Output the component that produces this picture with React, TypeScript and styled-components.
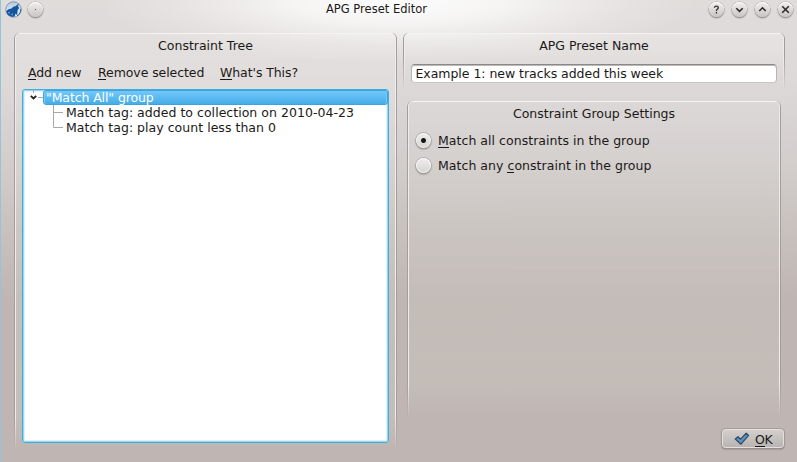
import React from 'react';
import styled, { createGlobalStyle, css } from 'styled-components';

const GlobalStyle = createGlobalStyle`
  html, body { margin: 0; padding: 0; }
  body { font-family: "DejaVu Sans", sans-serif; font-size: 12.5px; color: #1b1918; }
  * { box-sizing: border-box; }
`;

const Window = styled.div`
  width: 797px;
  height: 462px;
  overflow: hidden;
  display: flex;
  flex-direction: column;
  border-left: 1px solid #96c3dc;
  background:
    radial-gradient(ellipse 300px 64px at 397px 0, rgba(255,255,255,.95) 0%, rgba(255,255,255,.7) 35%, rgba(255,255,255,.2) 75%, rgba(255,255,255,0) 100%),
    linear-gradient(#e0dcda 0, #ddd9d8 80px, #d3cecc 160px, #c8c1be 230px, #bfb6b3 300px, #bfb6b3 100%);
`;

const TitleBar = styled.header`
  height: 33px;
  flex: none;
  display: grid;
  grid-template-columns: 325px 1fr 88px;
  align-items: start;
`;

const TitleButtons = styled.div<{ $gap: number; $left: number }>`
  display: flex;
  align-items: flex-start;
  gap: ${p => p.$gap}px;
  padding: 1px 0 0 ${p => p.$left}px;
`;

const Title = styled.h1`
  margin: 0;
  padding-top: 2px;
  font-size: 11.5px;
  font-weight: 400;
  line-height: 15px;
  white-space: nowrap;
`;

const RoundButton = styled.button`
  width: 15px;
  height: 15px;
  margin-top: 1px;
  padding: 0;
  display: grid;
  place-items: center;
  border: 0;
  border-radius: 50%;
  background: linear-gradient(#f0efee, #c9c5c2);
  box-shadow: 0 0 0 .6px #aaa5a2, 0 1px 1.5px #77716e, inset 0 1px 0 #fafafa;
  svg { display: block; fill: none; stroke: #302d2c; stroke-width: 1.6; }
`;

const StickyDot = styled.span`
  width: 1px;
  height: 1px;
  background: #5b5755;
  box-shadow: 0 0 1px #8f8b89;
`;

const Content = styled.main`
  flex: 1;
  display: grid;
  grid-template-columns: 383px 382px;
  column-gap: 6px;
  padding: 0 0 0 13px;
`;

const Panel = styled.section<{ $height: number; $tint: number }>`
  position: relative;
  height: ${p => p.$height}px;
  &::before {
    content: '';
    position: absolute;
    inset: 0;
    pointer-events: none;
    border-radius: 5px 5px 0 0;
    background: linear-gradient(rgba(255,255,255,${p => p.$tint}), rgba(212,213,204,.24));
    box-shadow: inset 1px 0 0 #a39e9b, inset -1px 0 0 #a39e9b, inset 0 1px 0 #f5f3f3,
      inset 2px 0 0 #efedec, inset -2px 0 0 #efedec;
    mask-image: linear-gradient(#000 calc(100% - 34px), transparent);
  }
  > * { position: relative; }
`;

const Caption = styled.h2`
  margin: 0;
  padding-top: 5px;
  font-size: 12.5px;
  font-weight: 400;
  line-height: 15px;
  text-align: center;
`;

const ToolBar = styled.nav`
  display: flex;
  gap: 16px;
  padding: 12px 0 0 14px;
  line-height: 15px;
`;

const Action = styled.span<{ $width: number }>`
  width: ${p => p.$width}px;
  letter-spacing: -.08px;
  white-space: nowrap;
`;

const Key = styled.span`
  background: linear-gradient(#1b1918, #1b1918) 0 100% / 100% 1px no-repeat;
`;

const Tree = styled.div`
  width: 367px;
  height: 354px;
  margin: 9px 0 0 8px;
  padding: 1px;
  border: 1px solid #3daee0;
  border-radius: 3px;
  background: #fff;
  box-shadow: inset 0 0 0 1px #9bd5f1, inset 0 0 0 2px #dff1fa;
`;

const rowBase = css`
  display: flex;
  align-items: stretch;
  height: 15px;
  line-height: 15px;
  white-space: nowrap;
`;

const RootRow = styled.div`
  ${rowBase}
  margin-top: -1px;
`;

const ChildRow = styled.div`
  ${rowBase}
  letter-spacing: .03px;
`;

const Branch = styled.svg`
  flex: none;
  display: block;
  fill: none;
  stroke: #aaa6a4;
`;

const Selected = styled.span`
  flex: 1;
  height: 15px;
  margin-right: -1px;
  padding-left: 2px;
  line-height: 14px;
  letter-spacing: -.1px;
  color: #fff;
  border: 1px solid #3ba4df;
  border-radius: 3px;
  background: linear-gradient(#73c8fb, #46ade8);
  box-shadow: inset 1px 0 0 #7ccbf7, inset -1px 0 0 #7ccbf7;
`;

const RightColumn = styled.div`
  display: flex;
  flex-direction: column;
`;

const SettingsSlot = styled.div`
  padding: 10px 4px 0;
`;

const NameField = styled.div`
  height: 19px;
  margin: 11px 8px 0;
  padding-left: 3.5px;
  line-height: 17px;
  letter-spacing: -.04px;
  border: 1px solid #b9b5b3;
  border-top: 1px solid #8b8886;
  border-bottom-color: #c9c5c3;
  border-radius: 4px;
  background: #fff;
  box-shadow: inset 0 1px 0 #bcbab9;
  white-space: nowrap;
`;

const RadioRow = styled.label`
  display: flex;
  align-items: center;
  gap: 7px;
  height: 25px;
  padding-left: 9px;
  letter-spacing: .04px;
  white-space: nowrap;
`;

const RadioGroup = styled.div`
  padding-top: 7px;
`;

const RadioDot = styled.span<{ $on?: boolean }>`
  width: 15px;
  height: 15px;
  border-radius: 50%;
  background: ${p => (p.$on ? 'radial-gradient(circle, #171717 0 2px, transparent 3px),' : '')} linear-gradient(#efeeed, #d5d4d0);
  box-shadow: 0 0 0 .7px #aaa5a2, 0 1px 2px #68625f, inset 0 0 0 1px rgba(255,255,255,.6);
`;

const Footer = styled.footer`
  display: flex;
  justify-content: flex-end;
  padding-top: 11px;
`;

const OkButton = styled.button`
  display: flex;
  align-items: center;
  gap: 5px;
  width: 62px;
  height: 19px;
  margin-right: 1px;
  padding: 0 0 0 11px;
  border: 1px solid #e3e0de;
  border-radius: 3.5px;
  background: linear-gradient(#d3cfcc, #b9b4b1);
  box-shadow: 0 0 0 .7px #9d9794, 0 1px 2px #6b6562;
  font: inherit;
  color: inherit;
  letter-spacing: -.3px;
  svg { display: block; flex: none; }
`;

const OkLabel = styled.span`
  padding-top: 1px;
`;

function WolfLogo() {
  return (
    <svg width="17" height="17" viewBox="0 0 17 17">
      <defs>
        <linearGradient id="sky" x1="0" y1="0" x2="0" y2="1">
          <stop offset="0" stopColor="#b4c9dd" />
          <stop offset="1" stopColor="#f2f7fb" />
        </linearGradient>
      </defs>
      <circle cx="8.5" cy="8.5" r="7.7" fill="url(#sky)" stroke="#7897b5" />
      <path d="M1.2 10.3L3.5 8.2L6.5 7.6L8.7 5.5L10.5 5.3L13.8 2.4L13 5.5L14.2 7L12.6 9L12.2 14.5L10.7 12.5L9.6 15.6C5 16.6 1.9 13.8 1.2 10.3Z" fill="#12559e" />
      <path d="M2.8 11.4L5 10.4L4.4 13.2ZM6 13.8L8 11.8L7.6 14.8Z" fill="#6ea4d3" />
      <path d="M15.8 8A7.5 7.5 0 0 1 12 14.8" fill="none" stroke="#2365a5" />
    </svg>
  );
}

const glyphs = {
  help: <path d="M2.4 2.7C2.6 .6 6.3 .6 6.3 2.7C6.3 4 4.4 4.1 4.4 6M4.4 7.1V8.6" strokeWidth="1.3" />,
  down: <path d="M1.3 3.2L4.5 6.4L7.7 3.2" />,
  up: <path d="M1.3 6L4.5 2.8L7.7 6" />,
  close: <path d="M1.2 1.2L7.8 7.8M7.8 1.2L1.2 7.8" />,
};

function WindowButton({ kind }: { kind: keyof typeof glyphs }) {
  return (
    <RoundButton aria-label={kind}>
      <svg width="9" height="9" viewBox="0 0 9 9">{glyphs[kind]}</svg>
    </RoundButton>
  );
}

export default function App() {
  return (
    <>
      <GlobalStyle />
      <Window>
        <TitleBar>
          <TitleButtons $gap={6} $left={4}>
            <WolfLogo />
            <RoundButton aria-label="On all desktops">
              <StickyDot />
            </RoundButton>
          </TitleButtons>
          <Title>APG Preset Editor</Title>
          <TitleButtons $gap={8} $left={0}>
            <WindowButton kind="help" />
            <WindowButton kind="down" />
            <WindowButton kind="up" />
            <WindowButton kind="close" />
          </TitleButtons>
        </TitleBar>
        <Content>
          <Panel $height={418} $tint={0.14}>
            <Caption>Constraint Tree</Caption>
            <ToolBar>
              <Action $width={54}><Key>A</Key>dd new</Action>
              <Action $width={106}><Key>R</Key>emove selected</Action>
              <Action $width={78}><Key>W</Key>hat's This?</Action>
            </ToolBar>
            <Tree>
              <RootRow>
                <Branch width="19" height="15">
                  <path d="M9.5 0V3M14 7.5H19" />
                  <path d="M6.8 5.8L9.5 8.5L12.2 5.8" stroke="#242120" strokeWidth="1.8" />
                </Branch>
                <Selected>"Match All" group</Selected>
              </RootRow>
              <ChildRow>
                <Branch width="42" height="15"><path d="M29.5 0V15M29.5 7.5H39" /></Branch>
                Match tag: added to collection on 2010-04-23
              </ChildRow>
              <ChildRow>
                <Branch width="42" height="15"><path d="M29.5 0V7.5H39" /></Branch>
                Match tag: play count less than 0
              </ChildRow>
            </Tree>
          </Panel>
          <RightColumn>
            <Panel $height={58} $tint={0.25}>
              <Caption>APG Preset Name</Caption>
              <NameField>Example 1: new tracks added this week</NameField>
            </Panel>
            <SettingsSlot>
              <Panel $height={317} $tint={0.06}>
                <Caption>Constraint Group Settings</Caption>
                <RadioGroup>
                  <RadioRow><RadioDot $on /><span><Key>M</Key>atch all constraints in the group</span></RadioRow>
                  <RadioRow><RadioDot /><span>Match any <Key>c</Key>onstraint in the group</span></RadioRow>
                </RadioGroup>
              </Panel>
            </SettingsSlot>
            <Footer>
              <OkButton>
                <svg width="16" height="14" viewBox="0 0 16 14">
                  <path d="M1.3 7L4 4.8L6.6 7.2L12.2 1.2L14.6 3.4L7 12.2Z" fill="#6391b8" stroke="#294a6b" strokeWidth="1.2" strokeLinejoin="round" />
                </svg>
                <OkLabel><Key>O</Key>K</OkLabel>
              </OkButton>
            </Footer>
          </RightColumn>
        </Content>
      </Window>
    </>
  );
}
